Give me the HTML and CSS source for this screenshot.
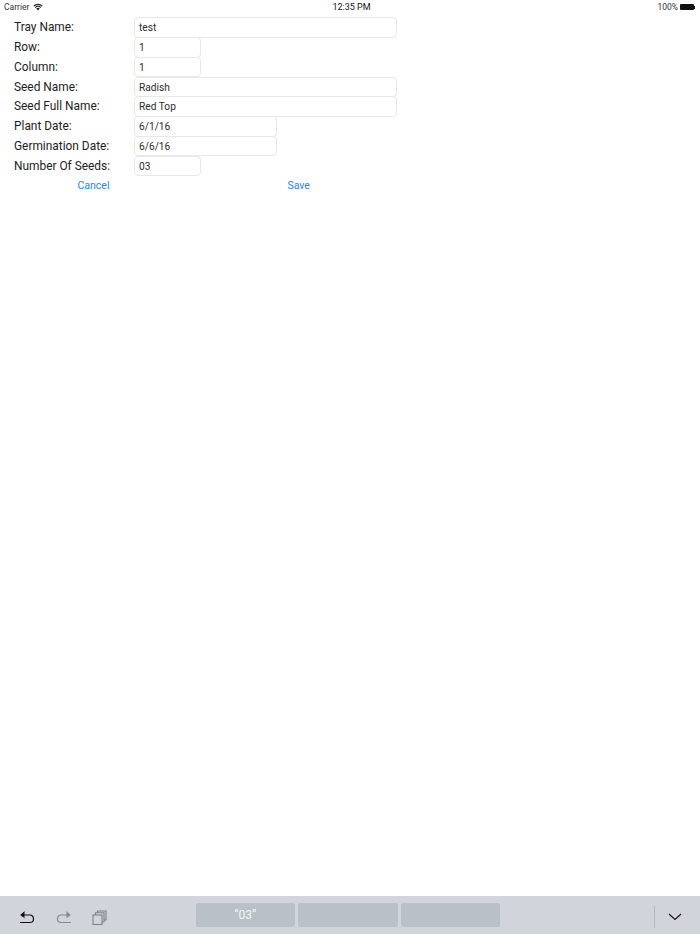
FILE: index.html
```html
<!DOCTYPE html>
<html lang="en">
<head>
    <meta charset="UTF-8">
    <title>Edit Tray</title>
    <link rel="stylesheet" href="styles.css">
</head>
<body>

    <div class="status-bar">
        <div class="status-left">
            <span>Carrier</span>
            <svg class="wifi" width="10" height="8" viewBox="0 0 10 8">
                <path d="M0.3 2.7 A6.6 6.6 0 0 1 9.7 2.7 L8.9 3.5 A5.5 5.5 0 0 0 1.1 3.5 Z" fill="#222"/>
                <path d="M1.8 4.2 A4.5 4.5 0 0 1 8.2 4.2 L7.4 5 A3.4 3.4 0 0 0 2.6 5 Z" fill="#222"/>
                <path d="M3.2 5.6 A2.5 2.5 0 0 1 6.8 5.6 L5 7.6 Z" fill="#222"/>
            </svg>
        </div>
        <div class="status-time">12:35 PM</div>
        <div class="status-right">
            <span>100%</span>
            <div class="battery"></div>
            <div class="battery-tip"></div>
        </div>
    </div>

    <div class="form">
        <div class="row">
            <label class="label">Tray Name:</label>
            <div class="field wide">test</div>
        </div>
        <div class="row">
            <label class="label">Row:</label>
            <div class="field small">1</div>
        </div>
        <div class="row">
            <label class="label">Column:</label>
            <div class="field small">1</div>
        </div>
        <div class="row">
            <label class="label">Seed Name:</label>
            <div class="field wide">Radish</div>
        </div>
        <div class="row">
            <label class="label">Seed Full Name:</label>
            <div class="field wide">Red Top</div>
        </div>
        <div class="row">
            <label class="label">Plant Date:</label>
            <div class="field medium">6/1/16</div>
        </div>
        <div class="row">
            <label class="label">Germination Date:</label>
            <div class="field medium">6/6/16</div>
        </div>
        <div class="row">
            <label class="label">Number Of Seeds:</label>
            <div class="field small">03</div>
        </div>
        <div class="actions">
            <button class="link cancel">Cancel</button>
            <button class="link save">Save</button>
        </div>
    </div>

    <div class="keyboard-bar">
        <div class="tools">
            <svg width="18" height="16" viewBox="0 0 18 16" fill="none" stroke="#111" stroke-width="1.2">
                <path d="M2 13.5 H12 C14.5 13.5 15.5 12 15.5 10 C15.5 7.5 14 6 12 6 H3"/>
                <path d="M6.5 2.6 L2.6 6 L6.5 8.8" fill="#111" stroke-width="0.6"/>
            </svg>
            <svg width="18" height="16" viewBox="0 0 18 16" fill="none" stroke="#85898f" stroke-width="1.2">
                <path d="M16 13.5 H6 C3.5 13.5 2.5 12 2.5 10 C2.5 7.5 4 6 6 6 H15"/>
                <path d="M11.5 2.6 L15.4 6 L11.5 8.8" fill="#85898f" stroke-width="0.6"/>
            </svg>
            <svg width="15" height="15" viewBox="0 0 15 15" fill="none" stroke="#7d8187" stroke-width="1.1">
                <rect x="1" y="5" width="9" height="9.5"/>
                <path d="M3.5 5 V2.8 H12 V12 H10"/>
                <path d="M5.5 2.8 V1 H14 V10 H12"/>
            </svg>
        </div>
        <div class="suggestions">
            <div class="suggestion">“03”</div>
            <div class="suggestion"></div>
            <div class="suggestion"></div>
        </div>
        <div class="divider"></div>
        <svg class="chevron" width="14" height="8" viewBox="0 0 14 8" fill="none" stroke="#111" stroke-width="1.1">
            <path d="M1 1 L7 6.5 L13 1"/>
        </svg>
    </div>

</body>
</html>
```

FILE: styles.css
```css
* {
    margin: 0;
    padding: 0;
    box-sizing: border-box;
}
html, body {
    height: 100%;
}
body {
    font-family: 'Roboto', 'Liberation Sans', Arial, sans-serif;
    background-color: #ffffff;
    color: #1c1c1c;
    display: flex;
    flex-direction: column;
    height: 934px;
    overflow: hidden;
}
.status-bar {
    height: 14px;
    padding: 0 5px 0 4px;
    display: flex;
    justify-content: space-between;
    align-items: center;
    font-size: 8.5px;
    color: #333;
    position: relative;
}
.status-left {
    display: flex;
    align-items: center;
    gap: 4px;
}
.status-time {
    position: absolute;
    left: 3px;
    right: 0;
    text-align: center;
    font-size: 9px;
    color: #111;
}
.status-right {
    display: flex;
    align-items: center;
    gap: 2px;
}
.battery {
    width: 14px;
    height: 6px;
    background-color: #111;
    border-radius: 1px;
}
.battery-tip {
    width: 1px;
    height: 3px;
    margin-left: -2px;
    background-color: #111;
}
.form {
    padding-top: 3.4px;
    display: flex;
    flex-direction: column;
}
.row {
    display: flex;
    align-items: center;
    height: 19.75px;
    padding-left: 14px;
}
.label {
    width: 120px;
    font-size: 11.9px;
}
.field {
    height: 20.5px;
    margin-bottom: -0.75px;
    padding-left: 4px;
    background-color: #fff;
    border: 1px solid #e8e8e8;
    border-radius: 4px;
    font-size: 10.2px;
    line-height: 19.5px;
    color: #2b2b2b;
}
.wide {
    width: 262.5px;
}
.medium {
    width: 143px;
}
.small {
    width: 66.5px;
}
.actions {
    display: flex;
    height: 18px;
    align-items: center;
    padding-top: 2px;
}
.link {
    background: none;
    border: none;
    color: #1b84fb;
    font-family: inherit;
    font-size: 10.5px;
}
.cancel {
    margin-left: 77.5px;
}
.save {
    margin-left: 178px;
}
.keyboard-bar {
    margin-top: auto;
    height: 38px;
    background-color: #d1d5db;
    display: flex;
    align-items: center;
    position: relative;
}
.tools {
    display: flex;
    align-items: center;
    gap: 19px;
    width: 195.5px;
    padding-left: 18px;
    padding-top: 4px;
}
.suggestions {
    display: flex;
    gap: 3px;
}
.suggestion {
    width: 99.5px;
    height: 24px;
    background-color: #b9c0c7;
    border-radius: 2px;
    color: #f4f5f6;
    font-size: 12px;
    line-height: 24px;
    text-align: center;
}
.divider {
    width: 1px;
    height: 22px;
    margin-left: 153.5px;
    margin-top: 4px;
    background-color: #b3b7bd;
}
.chevron {
    margin-left: 13px;
    margin-top: 4px;
}
```
